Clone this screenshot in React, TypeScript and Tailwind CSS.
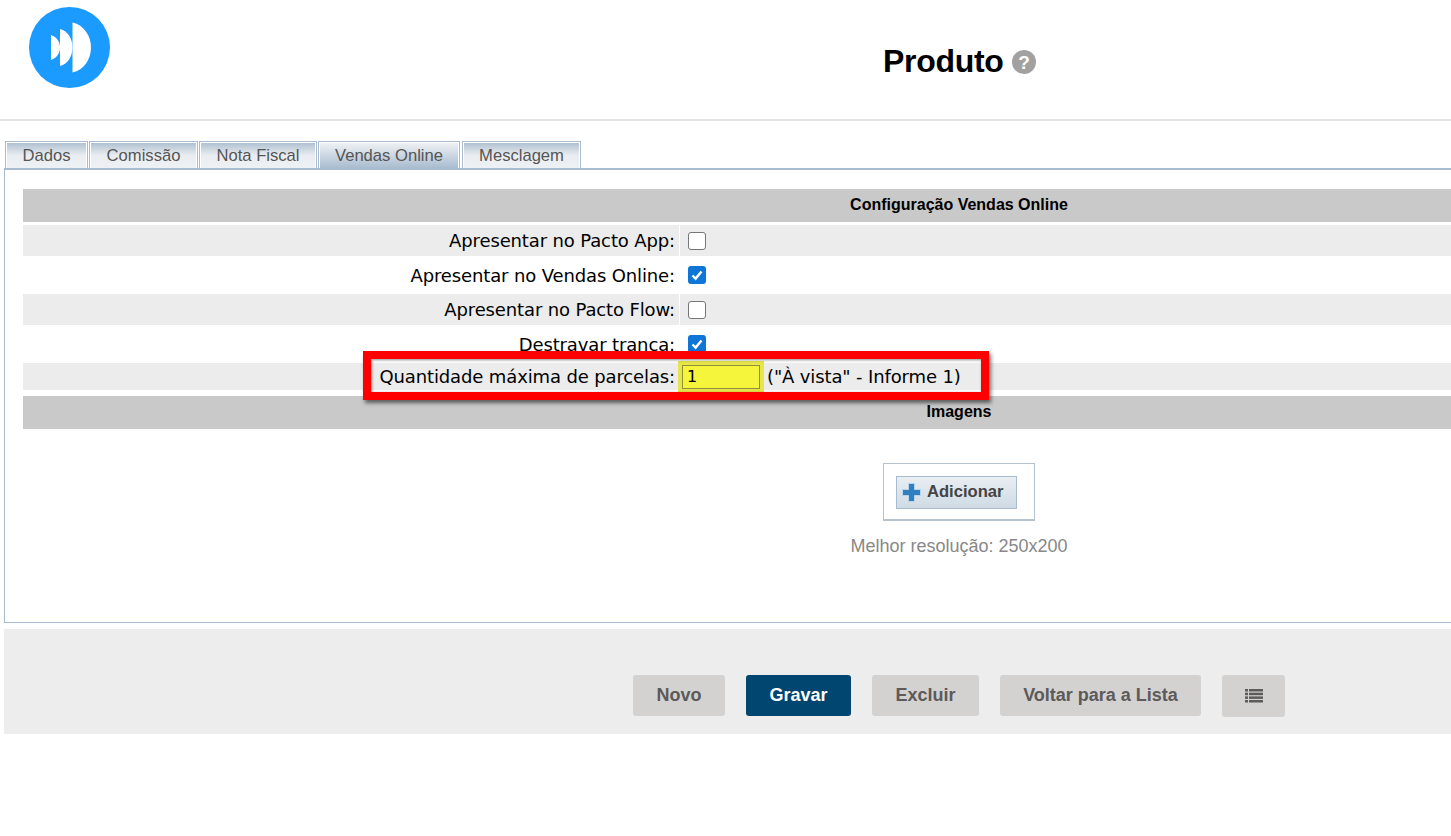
import React from "react";

const TABS = [
  { label: "Dados", width: "w-[83px]", active: false },
  { label: "Comissão", width: "w-[109px]", active: false },
  { label: "Nota Fiscal", width: "w-[118px]", active: false },
  { label: "Vendas Online", width: "w-[142px]", active: true },
  { label: "Mesclagem", width: "w-[119px] ml-px", active: false },
];

function Logo() {
  return (
    <svg width="81" height="81" viewBox="0 0 81 81" className="block">
      <circle cx="40.5" cy="40.5" r="40.5" fill="#1b9aff" />
      <path d="M22 28 C28 30 31 35 31 40.5 C31 46 28 51 22 53 Z" fill="#fff" />
      <path d="M31 22 C39 24 43.5 32 43.5 40.5 C43.5 49 39 57 31 59 Z" fill="#fff" />
      <path d="M43.5 15.5 C55 18 62 29 62 40.5 C62 52 55 63 43.5 65.5 Z" fill="#fff" />
    </svg>
  );
}

function Check({ checked }: { checked: boolean }) {
  return checked ? (
    <span className="w-[18px] h-[18px] rounded-[3px] bg-[#0f75d6] flex items-center justify-center">
      <svg width="14" height="14" viewBox="0 0 14 14">
        <path d="M2.5 7.5 L5.6 10.6 L11.5 3.4" fill="none" stroke="#fff" strokeWidth="2.4" />
      </svg>
    </span>
  ) : (
    <span className="w-[18px] h-[18px] rounded-[3px] bg-white border border-[#767676]" />
  );
}

function Row({ label, checked, shaded, h }: { label: string; checked: boolean; shaded: boolean; h: string }) {
  const bg = shaded ? "bg-[#ececec]" : "bg-white";
  return (
    <div className={`flex gap-px ${h}`}>
      <div className={`w-[656px] ${bg} flex items-center justify-end pr-[4px] text-[18px] tracking-[-0.13px] text-black`}>
        {label}
      </div>
      <div className={`flex-1 ${bg} flex items-center pl-[8px]`}>
        <Check checked={checked} />
      </div>
    </div>
  );
}

export default function App() {
  return (
    <div className="relative w-[1451px] h-[836px] overflow-hidden bg-white font-['Liberation_Sans',sans-serif]">
      {/* Header */}
      <div className="h-[121px] border-b-2 border-[#e4e4e4] relative flex">
        <div className="pl-[29px] pt-[7px]">
          <Logo />
        </div>
        <div className="absolute left-[883px] top-[42px] flex items-center gap-[8px]">
          <span className="text-[32px] leading-[38px] font-bold tracking-[-0.3px] text-black">Produto</span>
          <svg width="24" height="24" viewBox="0 0 24 24" className="mt-[1px]">
            <circle cx="12" cy="12" r="12" fill="#a3a0a0" />
            <text x="12" y="18.5" textAnchor="middle" fontSize="19" fontWeight="700" fill="#fff" fontFamily="Liberation Sans">?</text>
          </svg>
        </div>
      </div>

      {/* Tabs */}
      <div className="flex gap-px pl-[5px] h-[47px] items-end">
        {TABS.map((t) => (
          <div key={t.label} className={`${t.width} h-[27px] border border-[#a9bccf] border-b-0 p-px pb-0`}>
            <div
              className={`h-full flex items-center justify-center text-[16.6px] text-[#555] ${
                t.active
                  ? "pt-[1px] bg-gradient-to-b from-[#eef1f4] to-[#a9bccf]"
                  : "pt-[1px] bg-gradient-to-b from-[#b1c1d1] via-[#e9edf1] to-[#eef1f4]"
              }`}
            >
              {t.label}
            </div>
          </div>
        ))}
      </div>

      {/* Panel */}
      <div className="ml-[4px] h-[455px] border-l border-b border-[#a9bccf] border-t-2 border-t-[#a9bccf] pl-[18px] pt-[19px] font-['DejaVu_Sans',sans-serif]">
        <div className="w-[1872px]">
          <div className="h-[33px] pb-[2px] bg-[#c9c9c9] flex items-center justify-center font-['Liberation_Sans',sans-serif] font-bold text-[16px] text-black">
            Configuração Vendas Online
          </div>
          <div className="flex flex-col gap-[3px] mt-[3px]">
            <Row label="Apresentar no Pacto App:" checked={false} shaded h="h-[31px]" />
            <Row label="Apresentar no Vendas Online:" checked shaded={false} h="h-[32px]" />
            <Row label="Apresentar no Pacto Flow:" checked={false} shaded h="h-[31px]" />
            <Row label="Destravar tranca:" checked shaded={false} h="h-[32px]" />
            <div className="flex gap-px h-[27px]">
              <div className="w-[656px] bg-[#ececec] flex items-center justify-end pr-[4px] text-[18px] tracking-[-0.13px] text-black">
                Quantidade máxima de parcelas:
              </div>
              <div className="flex-1 bg-[#ececec] flex items-center gap-[7px] text-[18px] tracking-[-0.13px] text-black">
                <div className="w-[78px] h-[24px] ml-[2px] bg-[#f5f53c] border border-[#8f8f3a] shadow-[0_0_0_4px_#e6e64a] pl-[4px] flex items-center text-[16px]">
                  1
                </div>
                <span>("À vista" - Informe 1)</span>
              </div>
            </div>
          </div>
          <div className="h-[33px] pb-[2px] mt-[6px] bg-[#c9c9c9] flex items-center justify-center font-['Liberation_Sans',sans-serif] font-bold text-[16px] text-black">
            Imagens
          </div>

          {/* Upload */}
          <div className="flex flex-col items-center mt-[34px] font-['Liberation_Sans',sans-serif]">
            <div className="w-[152px] h-[58px] border border-[#b5c3d1] border-b-2 pl-[12px] pt-[12px]">
              <div className="w-[121px] h-[33px] border border-[#a9bccf] bg-gradient-to-b from-[#e9eef2] to-[#cfdbe5] flex items-center pl-[5px] gap-[6px]">
                <svg width="19" height="19" viewBox="0 0 19 19">
                  <path d="M6.5 0.5 H12.5 V6.5 H18.5 V12.5 H12.5 V18.5 H6.5 V12.5 H0.5 V6.5 H6.5 Z" fill="#2f7fc1" stroke="#b9d5ec" strokeWidth="1" />
                </svg>
                <span className="text-[16.6px] font-bold text-[#444]">Adicionar</span>
              </div>
            </div>
            <div className="mt-[12px] text-[18px] text-[#888]">Melhor resolução: 250x200</div>
          </div>
        </div>
      </div>

      {/* Footer */}
      <div className="ml-[4px] mt-[6px] h-[105px] bg-[#ededed] flex items-start pt-[46px] pl-[629px] font-['Liberation_Sans',sans-serif] text-[18px] font-bold text-[#5c5a5a]">
        <button className="w-[92px] h-[41px] rounded-[3px] bg-[#d3d2d0]">Novo</button>
        <button className="w-[105px] h-[41px] ml-[21px] rounded-[3px] bg-[#004671] text-white">Gravar</button>
        <button className="w-[107px] h-[41px] ml-[21px] rounded-[3px] bg-[#d3d2d0]">Excluir</button>
        <button className="w-[201px] h-[41px] ml-[21px] rounded-[3px] bg-[#d3d2d0]">Voltar para a Lista</button>
        <button className="w-[63px] h-[42px] ml-[21px] rounded-[3px] bg-[#d3d2d0] flex items-center justify-center pb-[2px]">
          <svg width="18" height="15" viewBox="0 0 18 15" fill="#5c5a5a">
            <rect x="0" y="1" width="3" height="2.5" />
            <rect x="4" y="1" width="14" height="2.5" />
            <rect x="0" y="4.7" width="3" height="2.5" />
            <rect x="4" y="4.7" width="14" height="2.5" />
            <rect x="0" y="8.4" width="3" height="2.5" />
            <rect x="4" y="8.4" width="14" height="2.5" />
            <rect x="0" y="12" width="3" height="2.5" />
            <rect x="4" y="12" width="14" height="2.5" />
          </svg>
        </button>
      </div>

      {/* Red highlight over the field */}
      <div className="absolute left-[363px] top-[351px] w-[626px] h-[49px] border-[8px] border-[#ff0000] shadow-[2px_3px_4px_rgba(0,0,0,0.55),inset_1px_1px_3px_rgba(0,0,0,0.45)]" />
    </div>
  );
}
